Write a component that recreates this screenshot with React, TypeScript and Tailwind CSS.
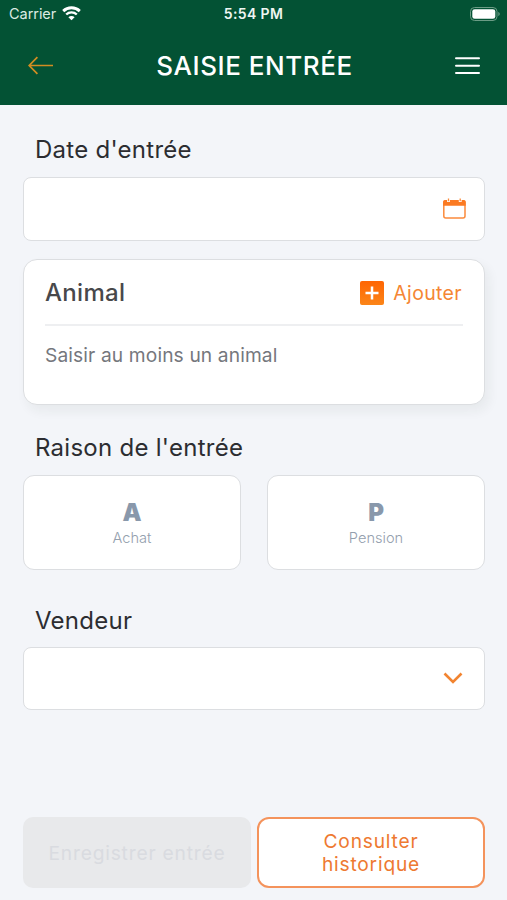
import type { ReactNode } from 'react'

const reasons = [
  { code: 'A', label: 'Achat' },
  { code: 'P', label: 'Pension' },
]

function StatusBar() {
  return (
    <div className="relative flex h-[27px] items-center justify-between pl-[9px] pr-[7px] text-white">
      <div className="flex items-center gap-[6px]">
        <span className="pt-px text-[14.5px] leading-none tracking-[-0.05px] text-[#dcebe3]">Carrier</span>
        <svg width="19" height="15" viewBox="0 0 19 15" fill="none" stroke="currentColor">
          <path d="M1.2 5.1a12 12 0 0 1 16.6 0" strokeWidth="2.9" />
          <path d="M4.2 8.5a7.6 7.6 0 0 1 10.6 0" strokeWidth="2.4" />
          <path d="M9.5 14.3 6.4 11.2a4.4 4.4 0 0 1 6.2 0Z" fill="currentColor" stroke="none" />
        </svg>
      </div>
      <span className="absolute left-1/2 top-[7px] -translate-x-1/2 text-[14px] font-semibold leading-none tracking-[0.35px] text-[#eef6f2]">
        5:54 PM
      </span>
      <svg width="30" height="14" viewBox="0 0 30 14" fill="none">
        <rect x="0.5" y="0.5" width="26.5" height="13" rx="4" stroke="#6b9c85" />
        <rect x="2.3" y="2.2" width="23" height="9.6" rx="2.4" fill="#fff" />
        <path d="M28.3 5v4c.9-.3 1.4-1.1 1.4-2s-.5-1.7-1.4-2Z" fill="#6b9c85" />
      </svg>
    </div>
  )
}

function Header() {
  return (
    <header className="h-[104.5px] shrink-0 bg-[#035234]">
      <StatusBar />
      <div className="flex h-[77px] items-center justify-between pl-7 pr-[27px]">
        <button aria-label="Retour">
          <svg width="26" height="20" viewBox="0 0 26 20" fill="none" stroke="#d18d22" strokeWidth="1.7">
            <path d="M25 9.5H1.2M9.4 1.2 1.2 9.5l8.2 8.3" />
          </svg>
        </button>
        <h1 className="text-[26px] font-medium leading-none tracking-[0.55px] text-white">SAISIE ENTRÉE</h1>
        <button aria-label="Menu">
          <svg width="25" height="20" viewBox="0 0 25 20" stroke="#fff" strokeWidth="2" strokeLinecap="round">
            <path d="M1 2.2h23M1 9.7h23M1 17h23" />
          </svg>
        </button>
      </div>
    </header>
  )
}

function Label({ children }: { children: ReactNode }) {
  return <h2 className="ml-3 text-[24px] leading-[30px] tracking-[0.27px] text-[#2c2d31]">{children}</h2>
}

export default function App() {
  return (
    <div className="flex h-[900px] w-[507px] flex-col overflow-hidden bg-[#f3f5f9] font-['Inter',sans-serif]">
      <Header />

      <main className="flex flex-1 flex-col pb-[12px] pl-[23px] pr-[22px] pt-[30.5px]">
        <Label>Date d'entrée</Label>
        <div className="mt-[12px] flex h-[64px] items-center justify-end rounded-[8px] border border-[#dcdee1] bg-white pr-[18px]">
          <svg width="23" height="22" viewBox="0 0 23 22" fill="none">
            <rect x="0.8" y="2.8" width="21.2" height="17.2" rx="2" stroke="#fb8b3c" strokeWidth="1.5" />
            <path d="M.1 7.8V4.1a2 2 0 0 1 2-2h18.6a2 2 0 0 1 2 2v3.7Z" fill="#fb7a22" />
            <path d="M5.5 1v3M17.2 1v3" stroke="#fff" strokeWidth="2.8" />
            <path d="M5.5.6v2.6M17.2.6v2.6" stroke="#fb8b3c" strokeWidth="1.3" />
          </svg>
        </div>

        <section className="mt-[18px] h-[146px] rounded-[14px] border border-[#dcdee1] bg-white px-[21px] shadow-[4px_6px_12px_rgba(40,50,40,0.06)]">
          <div className="flex h-[66px] items-center justify-between border-b-2 border-[#eeeff1] pt-[2px]">
            <h3 className="text-[24px] font-medium leading-none tracking-[0.3px] text-[#48484b]">Animal</h3>
            <button className="flex items-center gap-[9.5px] pr-px text-[19.5px] leading-none tracking-[0.35px] text-[#f58634]">
              <svg width="24" height="24" viewBox="0 0 24 24" className="mb-px">
                <defs>
                  <linearGradient id="plus" x1="0" y1="0" x2="0" y2="1">
                    <stop offset="0" stopColor="#ff6503" />
                    <stop offset="1" stopColor="#fb8518" />
                  </linearGradient>
                </defs>
                <rect width="24" height="24" rx="2" fill="url(#plus)" />
                <path d="M12 5.5v13M5.5 12h13" stroke="#fff" strokeWidth="2.5" />
              </svg>
              <span className="pt-px">Ajouter</span>
            </button>
          </div>
          <p className="mt-[16px] text-[19.2px] leading-[26px] tracking-[0.12px] text-[#75777d]">
            Saisir au moins un animal
          </p>
        </section>

        <div className="mt-[28px]">
          <Label>Raison de l'entrée</Label>
        </div>
        <div className="mt-[12px] grid grid-cols-2 gap-[26px]">
          {reasons.map(reason => (
            <button
              key={reason.code}
              className="flex h-[95px] flex-col items-center rounded-[11px] border border-[#dcdee1] bg-white pt-[23px]"
            >
              <span className="text-[24px] font-black leading-[28px] text-[#8998ab]">{reason.code}</span>
              <span className="mt-px text-[14.6px] font-light leading-[20px] text-[#94a0ae]">{reason.label}</span>
            </button>
          ))}
        </div>

        <div className="mt-[35.5px]">
          <Label>Vendeur</Label>
        </div>
        <div className="mt-[11.5px] flex h-[62.5px] items-center justify-end rounded-[8px] border border-[#dcdee1] bg-white pr-[21px]">
          <svg width="20" height="12" viewBox="0 0 20 12" fill="none" stroke="#f28430" strokeWidth="2.6">
            <path d="m1.5 1.5 8.5 8.5 8.5-8.5" />
          </svg>
        </div>

        <div className="mt-auto grid grid-cols-2 gap-[6px] text-[19.2px] leading-[23px] tracking-[0.8px]">
          <button disabled className="h-[71px] rounded-[10px] bg-[#e8e9eb] pt-[2px] text-[#d9dbe0]">
            Enregistrer entrée
          </button>
          <button className="h-[71px] rounded-[12px] border-2 border-[#f4935c] bg-white px-10 text-[#ee7931]">
            Consulter historique
          </button>
        </div>
      </main>
    </div>
  )
}
